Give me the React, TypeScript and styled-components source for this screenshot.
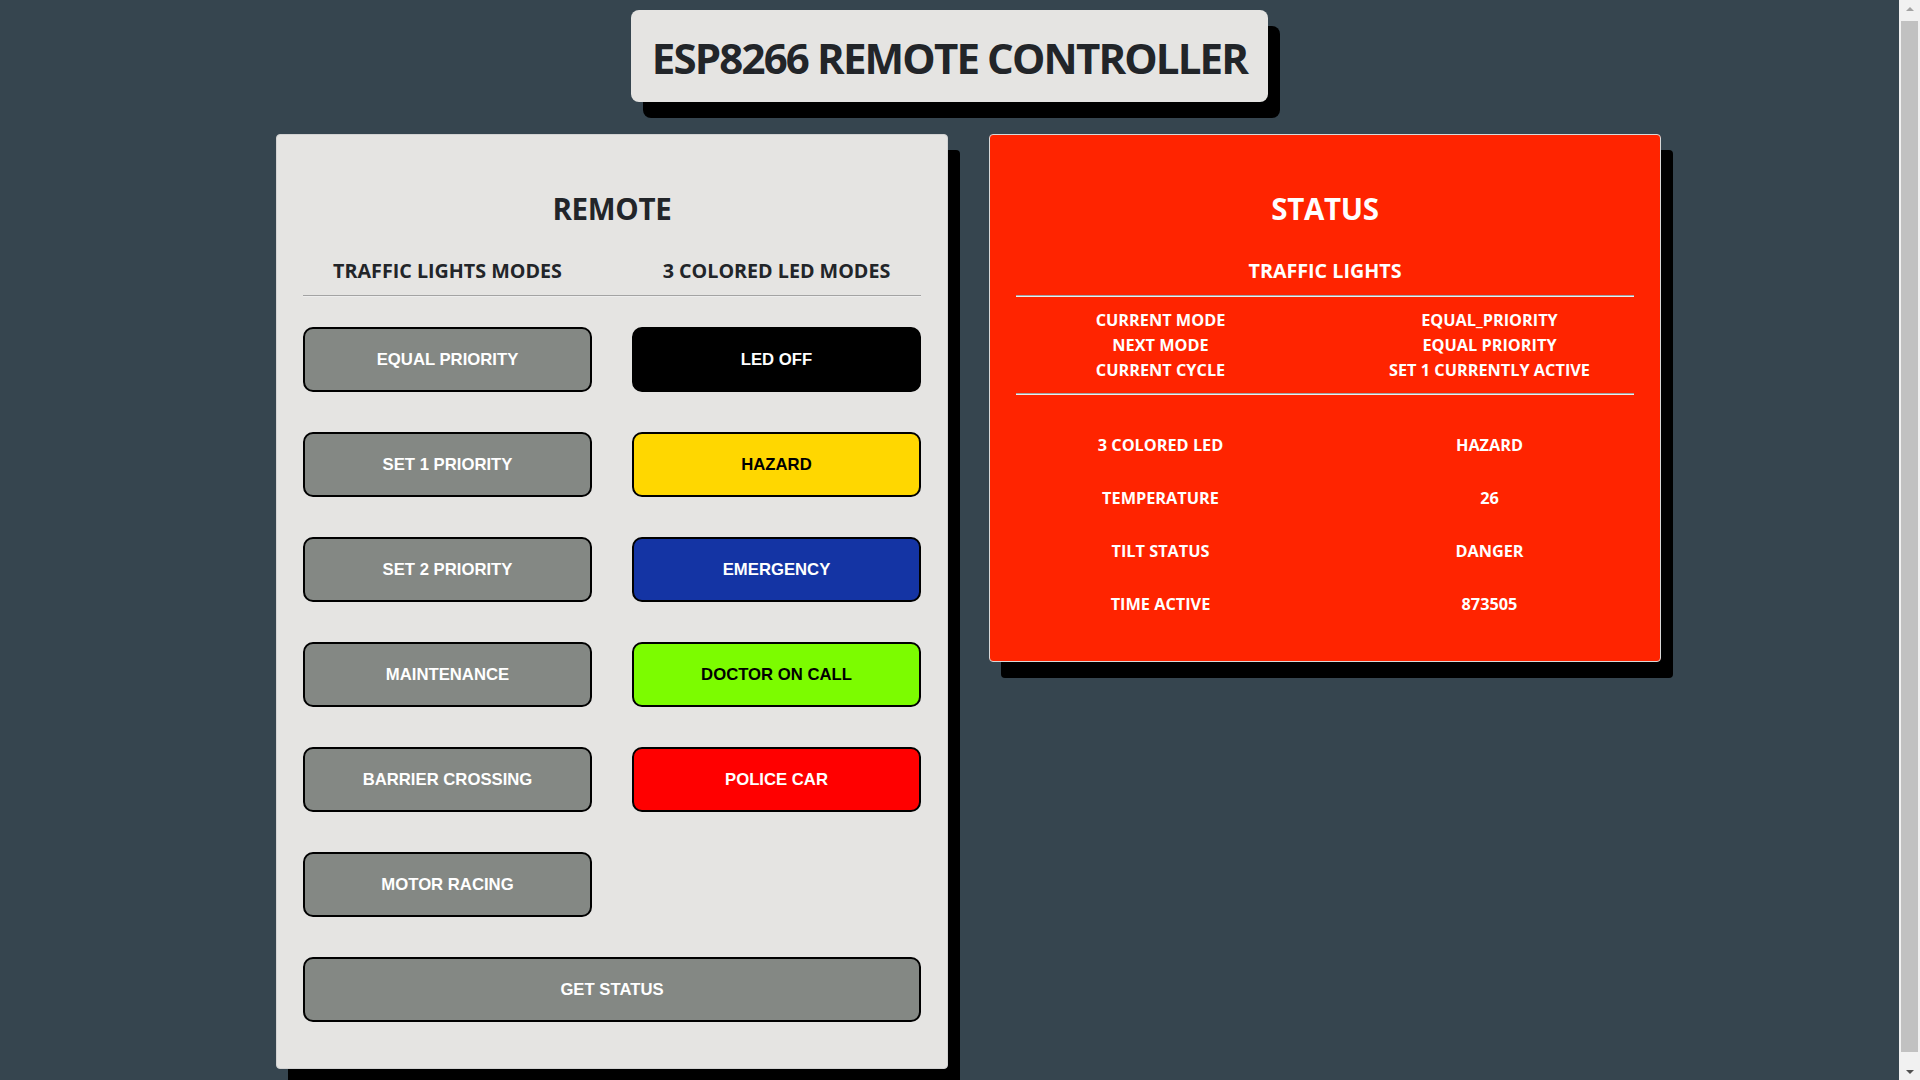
import React from "react";
import styled, { createGlobalStyle } from "styled-components";

const GlobalStyle = createGlobalStyle`
  html, body {
    margin: 0;
    padding: 0;
    background: #36454f;
  }
  body {
    font-family: "Open Sans", "Noto Sans", sans-serif;
    color: #222;
  }
  * { box-sizing: border-box; }
`;

const Shell = styled.div`
  display: flex;
  align-items: flex-start;
`;

const Page = styled.div`
  flex: 1;
  min-width: 0;
  display: flex;
  flex-direction: column;
  align-items: center;
  padding: 10px 0 30px;
`;

const ScrollTrack = styled.aside`
  position: sticky;
  top: 0;
  flex: 0 0 21px;
  height: 100vh;
  background: #f1f1f1;
  display: flex;
  flex-direction: column;
  align-items: stretch;
`;

const ScrollArrow = styled.div<{ $dir: "up" | "down" }>`
  height: 17px;
  flex: 0 0 17px;
  display: flex;
  align-items: center;
  justify-content: center;
  &::before {
    content: "";
    width: 0;
    height: 0;
    border-left: 4px solid transparent;
    border-right: 4px solid transparent;
    ${(p) =>
      p.$dir === "up"
        ? "border-bottom: 4px solid #a3a3a3;"
        : "border-top: 4px solid #505050;"}
  }
`;

const ScrollThumb = styled.div`
  flex: 1;
  margin: 4px 2px 11px 2px;
  background: #c1c1c1;
`;

const TitleBox = styled.header`
  background: #e5e4e2;
  border-radius: 8px;
  box-shadow: 12px 16px 0 #000;
  height: 92px;
  padding: 0 21px;
  display: flex;
  align-items: center;
  justify-content: center;
`;

const Title = styled.h1`
  margin: 0;
  font-family: "Open Sans", "Noto Sans", sans-serif;
  font-weight: 700;
  font-size: 42px;
  letter-spacing: -1.85px;
  line-height: 1;
  color: #222529;
  transform: translateY(2px);
`;

const Panels = styled.main`
  display: flex;
  align-items: flex-start;
  justify-content: center;
  gap: 41px;
  margin-top: 32px;
  padding-left: 38px;
`;

const Panel = styled.section<{ $variant: "light" | "red" }>`
  width: 672px;
  padding: 55px 26px ${(p) => (p.$variant === "light" ? "46px" : "30px")};
  border-radius: 4px;
  background: ${(p) => (p.$variant === "light" ? "#e5e4e2" : "#ff2400")};
  border: 1px solid ${(p) => (p.$variant === "light" ? "#d2d2d2" : "#d8d8d8")};
  box-shadow: 12px 16px 0 #000;
  color: ${(p) => (p.$variant === "light" ? "#222529" : "#ffffff")};
  text-align: center;
`;

const PanelTitle = styled.h2`
  margin: 0;
  font-size: 29.5px;
  line-height: 38px;
  font-weight: 700;
  letter-spacing: -0.3px;
`;

const SubHeadRow = styled.div<{ $cols: number }>`
  display: grid;
  grid-template-columns: repeat(${(p) => p.$cols}, 1fr);
  column-gap: 40px;
  margin-top: 30px;
`;

const SubHead = styled.h3`
  margin: 0;
  font-size: 19.7px;
  line-height: 26px;
  font-weight: 700;
  letter-spacing: 0;
`;

const Divider = styled.hr`
  margin: 11px 0 0;
  height: 0;
  border: none;
  border-top: 1px solid #a3a3a3;
  border-bottom: 1px solid #ededed;
`;

const ButtonGrid = styled.div`
  display: grid;
  grid-template-columns: 1fr 1fr;
  column-gap: 40px;
  row-gap: 40px;
  margin-top: 30px;
`;

type Tone = "gray" | "black" | "yellow" | "blue" | "green" | "red";

const toneBg: Record<Tone, string> = {
  gray: "#848884",
  black: "#000000",
  yellow: "#ffd700",
  blue: "#1434a4",
  green: "#7cfc00",
  red: "#ff0000",
};

const toneFg: Record<Tone, string> = {
  gray: "#ffffff",
  black: "#ffffff",
  yellow: "#000000",
  blue: "#ffffff",
  green: "#000000",
  red: "#ffffff",
};

const ModeButton = styled.button<{ $tone: Tone; $wide?: boolean }>`
  height: 65px;
  border: 2px solid #000;
  border-radius: 10px;
  background: ${(p) => toneBg[p.$tone]};
  color: ${(p) => toneFg[p.$tone]};
  font-family: "Liberation Sans", Arial, sans-serif;
  font-weight: 700;
  font-size: 16.7px;
  padding: 0;
  cursor: pointer;
  grid-column: ${(p) => (p.$wide ? "1 / span 2" : "auto")};
`;

const Spacer = styled.div``;

const InfoGrid = styled.div<{ $rowHeight: number; $top: number }>`
  display: grid;
  grid-template-columns: 1fr 1fr;
  column-gap: 40px;
  grid-auto-rows: ${(p) => p.$rowHeight}px;
  align-items: center;
  margin-top: ${(p) => p.$top}px;
`;

const InfoCell = styled.div`
  font-size: 16.3px;
  font-weight: 700;
  letter-spacing: 0;
  line-height: 21px;
`;

const DividerTight = styled(Divider)`
  margin-top: 10px;
`;

const trafficRows: [string, string][] = [
  ["CURRENT MODE", "EQUAL_PRIORITY"],
  ["NEXT MODE", "EQUAL PRIORITY"],
  ["CURRENT CYCLE", "SET 1 CURRENTLY ACTIVE"],
];

const otherRows: [string, string][] = [
  ["3 COLORED LED", "HAZARD"],
  ["TEMPERATURE", "26"],
  ["TILT STATUS", "DANGER"],
  ["TIME ACTIVE", "873505"],
];

const leftButtons = [
  "EQUAL PRIORITY",
  "SET 1 PRIORITY",
  "SET 2 PRIORITY",
  "MAINTENANCE",
  "BARRIER CROSSING",
  "MOTOR RACING",
];

const rightButtons: [string, Tone][] = [
  ["LED OFF", "black"],
  ["HAZARD", "yellow"],
  ["EMERGENCY", "blue"],
  ["DOCTOR ON CALL", "green"],
  ["POLICE CAR", "red"],
];

export default function App() {
  const cells: React.ReactNode[] = [];
  for (let i = 0; i < leftButtons.length; i++) {
    cells.push(
      <ModeButton key={"l" + i} $tone="gray">
        {leftButtons[i]}
      </ModeButton>
    );
    const r = rightButtons[i];
    cells.push(
      r ? (
        <ModeButton key={"r" + i} $tone={r[1]}>
          {r[0]}
        </ModeButton>
      ) : (
        <Spacer key={"r" + i} />
      )
    );
  }

  return (
    <>
      <GlobalStyle />
      <Shell>
        <Page>
          <TitleBox>
            <Title>ESP8266 REMOTE CONTROLLER</Title>
          </TitleBox>
          <Panels>
            <Panel $variant="light">
              <PanelTitle>REMOTE</PanelTitle>
              <SubHeadRow $cols={2}>
                <SubHead>TRAFFIC LIGHTS MODES</SubHead>
                <SubHead>3 COLORED LED MODES</SubHead>
              </SubHeadRow>
              <Divider />
              <ButtonGrid>
                {cells}
                <ModeButton $tone="gray" $wide>
                  GET STATUS
                </ModeButton>
              </ButtonGrid>
            </Panel>
            <Panel $variant="red">
              <PanelTitle>STATUS</PanelTitle>
              <SubHeadRow $cols={1}>
                <SubHead>TRAFFIC LIGHTS</SubHead>
              </SubHeadRow>
              <Divider />
              <InfoGrid $rowHeight={25} $top={11}>
                {trafficRows.map(([k, v]) => (
                  <React.Fragment key={k}>
                    <InfoCell>{k}</InfoCell>
                    <InfoCell>{v}</InfoCell>
                  </React.Fragment>
                ))}
              </InfoGrid>
              <DividerTight />
              <InfoGrid $rowHeight={53} $top={24}>
                {otherRows.map(([k, v]) => (
                  <React.Fragment key={k}>
                    <InfoCell>{k}</InfoCell>
                    <InfoCell>{v}</InfoCell>
                  </React.Fragment>
                ))}
              </InfoGrid>
            </Panel>
          </Panels>
        </Page>
        <ScrollTrack>
          <ScrollArrow $dir="up" />
          <ScrollThumb />
          <ScrollArrow $dir="down" />
        </ScrollTrack>
      </Shell>
    </>
  );
}
